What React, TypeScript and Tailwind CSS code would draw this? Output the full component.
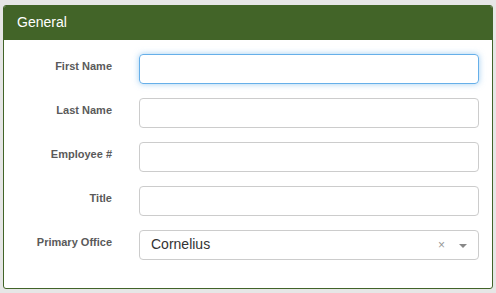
import React from "react";

const fields = ["First Name", "Last Name", "Employee #", "Title"];

export default function App() {
  return (
    <div className="w-[496px] h-[293px] bg-[#e6e6e6] pt-[5px] pl-[3px] pr-[3px] font-['Liberation_Sans',Arial,sans-serif]">
      <div className="w-[490px] h-[284px] border border-[#426428] rounded-[3px] bg-white overflow-hidden">
        <div className="h-[34px] bg-[#426428] text-white text-[14px] leading-[20px] pl-[13px] pt-[6px]">
          General
        </div>
        <div className="flex flex-col gap-[14px] pt-[14px] pr-[13px]">
          {fields.map((label, i) => (
            <div key={label} className="flex">
              <div className="w-[120px] shrink-0 pr-[12px] pt-[5px] text-right text-[11px] leading-[14px] font-bold text-[#5a5a5a]">
                {label}
              </div>
              <input
                className={
                  i === 0
                    ? "ml-[15px] flex-1 h-[30px] rounded-[4px] border border-[#66afe9] shadow-[0_0_6px_rgba(102,175,233,0.6)] outline-none"
                    : "ml-[15px] flex-1 h-[30px] rounded-[4px] border border-[#ccc] outline-none"
                }
              />
            </div>
          ))}
          <div className="flex">
            <div className="w-[120px] shrink-0 pr-[12px] pt-[5px] text-right text-[11px] leading-[14px] font-bold text-[#5a5a5a]">
              Primary Office
            </div>
            <div className="ml-[15px] flex-1 h-[30px] rounded-[4px] border border-[#ccc] flex items-center pl-[11px] pr-[11px]">
              <span className="flex-1 text-[14px] leading-[20px] text-[#333] -mt-[2px]">Cornelius</span>
              <span className="text-[#999] text-[12px] leading-[12px] mr-[14px]">×</span>
              <span className="w-0 h-0 border-l-[4px] border-r-[4px] border-t-[4px] border-l-transparent border-r-transparent border-t-[#888] mt-[2px]"></span>
            </div>
          </div>
        </div>
      </div>
    </div>
  );
}
